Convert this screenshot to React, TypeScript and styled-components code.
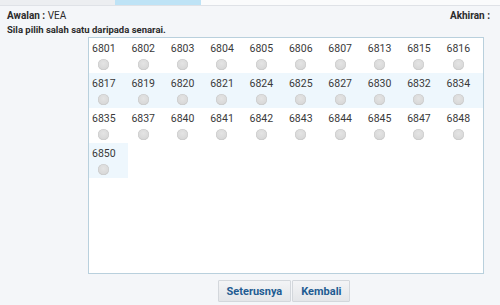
import React from "react";
import styled, { createGlobalStyle } from "styled-components";

const Global = createGlobalStyle`
  html, body { margin: 0; padding: 0; }
  body {
    background: #f4f6f9;
    font-family: Roboto, "Liberation Sans", Arial, sans-serif;
    color: #2b2b2b;
    width: 500px;
    height: 305px;
    overflow: hidden;
  }
`;

const Page = styled.div`
  width: 500px;
  height: 305px;
  display: flex;
  flex-direction: column;
`;

const TopStrip = styled.div`
  height: 5px;
  flex: none;
  display: flex;
  border-bottom: 1px solid #dfe2e7;
  background: #fafbfc;
`;

const StripSeg = styled.div<{ $w: number; $bg: string }>`
  width: ${(p) => p.$w}px;
  background: ${(p) => p.$bg};
`;

const Header = styled.div`
  display: flex;
  justify-content: space-between;
  padding: 3px 10px 0 7px;
  font-size: 10px;
  line-height: 14px;
`;

const Label = styled.span`
  font-weight: 700;
`;

const Instruction = styled.div`
  padding: 0 7px;
  font-size: 9.5px;
  line-height: 13px;
  font-weight: 700;
`;

const Box = styled.div`
  margin: 1px 0 0 88px;
  width: 394px;
  height: 235px;
  border: 1px solid #b9d0dd;
  background: #fff;
  flex: none;
`;

const Grid = styled.div`
  display: grid;
  grid-template-columns: repeat(10, 39.4px);
  grid-auto-rows: 35px;
`;

const Cell = styled.div<{ $alt: boolean }>`
  background: ${(p) => (p.$alt ? "#eef7fd" : "transparent")};
  padding: 4px 0 0 3px;
  display: flex;
`;

const Option = styled.label`
  display: inline-flex;
  flex-direction: column;
  align-items: center;
  font-size: 10.5px;
  line-height: 13px;
  color: #3a3a3a;
`;

const Radio = styled.span`
  margin-top: 4px;
  width: 11px;
  height: 11px;
  border-radius: 50%;
  background: radial-gradient(circle at 50% 40%, #e4e4e4 0%, #d9d9d9 60%, #cdcdcd 100%);
  box-shadow: inset 0 0 0 0.5px #c8c8c8;
`;

const Footer = styled.div`
  display: flex;
  justify-content: center;
  margin-top: 6px;
  padding-left: 68px;
  gap: 1px;
`;

const Button = styled.button`
  font-family: Roboto, "Liberation Sans", Arial, sans-serif;
  font-weight: 700;
  font-size: 11px;
  color: #1f5c92;
  height: 22px;
  padding: 0 8px;
  border: 1px solid #d3d7dc;
  border-radius: 1px;
  background: linear-gradient(#f3f4f6, #e4e6e9);
  cursor: pointer;
`;

const codes = [
  "6801", "6802", "6803", "6804", "6805", "6806", "6807", "6813", "6815", "6816",
  "6817", "6819", "6820", "6821", "6824", "6825", "6827", "6830", "6832", "6834",
  "6835", "6837", "6840", "6841", "6842", "6843", "6844", "6845", "6847", "6848",
  "6850",
];

export default function App() {
  return (
    <Page>
      <Global />
      <TopStrip>
        <StripSeg $w={115} $bg="#eceef1" />
        <StripSeg $w={86} $bg="#bee3f6" />
      </TopStrip>
      <Header>
        <span>
          <Label>Awalan :</Label> VEA
        </span>
        <Label>Akhiran :</Label>
      </Header>
      <Instruction>Sila pilih salah satu daripada senarai.</Instruction>
      <Box>
        <Grid>
          {codes.map((c, i) => (
            <Cell key={c} $alt={Math.floor(i / 10) % 2 === 1}>
              <Option>
                {c}
                <Radio />
              </Option>
            </Cell>
          ))}
        </Grid>
      </Box>
      <Footer>
        <Button>Seterusnya</Button>
        <Button>Kembali</Button>
      </Footer>
    </Page>
  );
}
